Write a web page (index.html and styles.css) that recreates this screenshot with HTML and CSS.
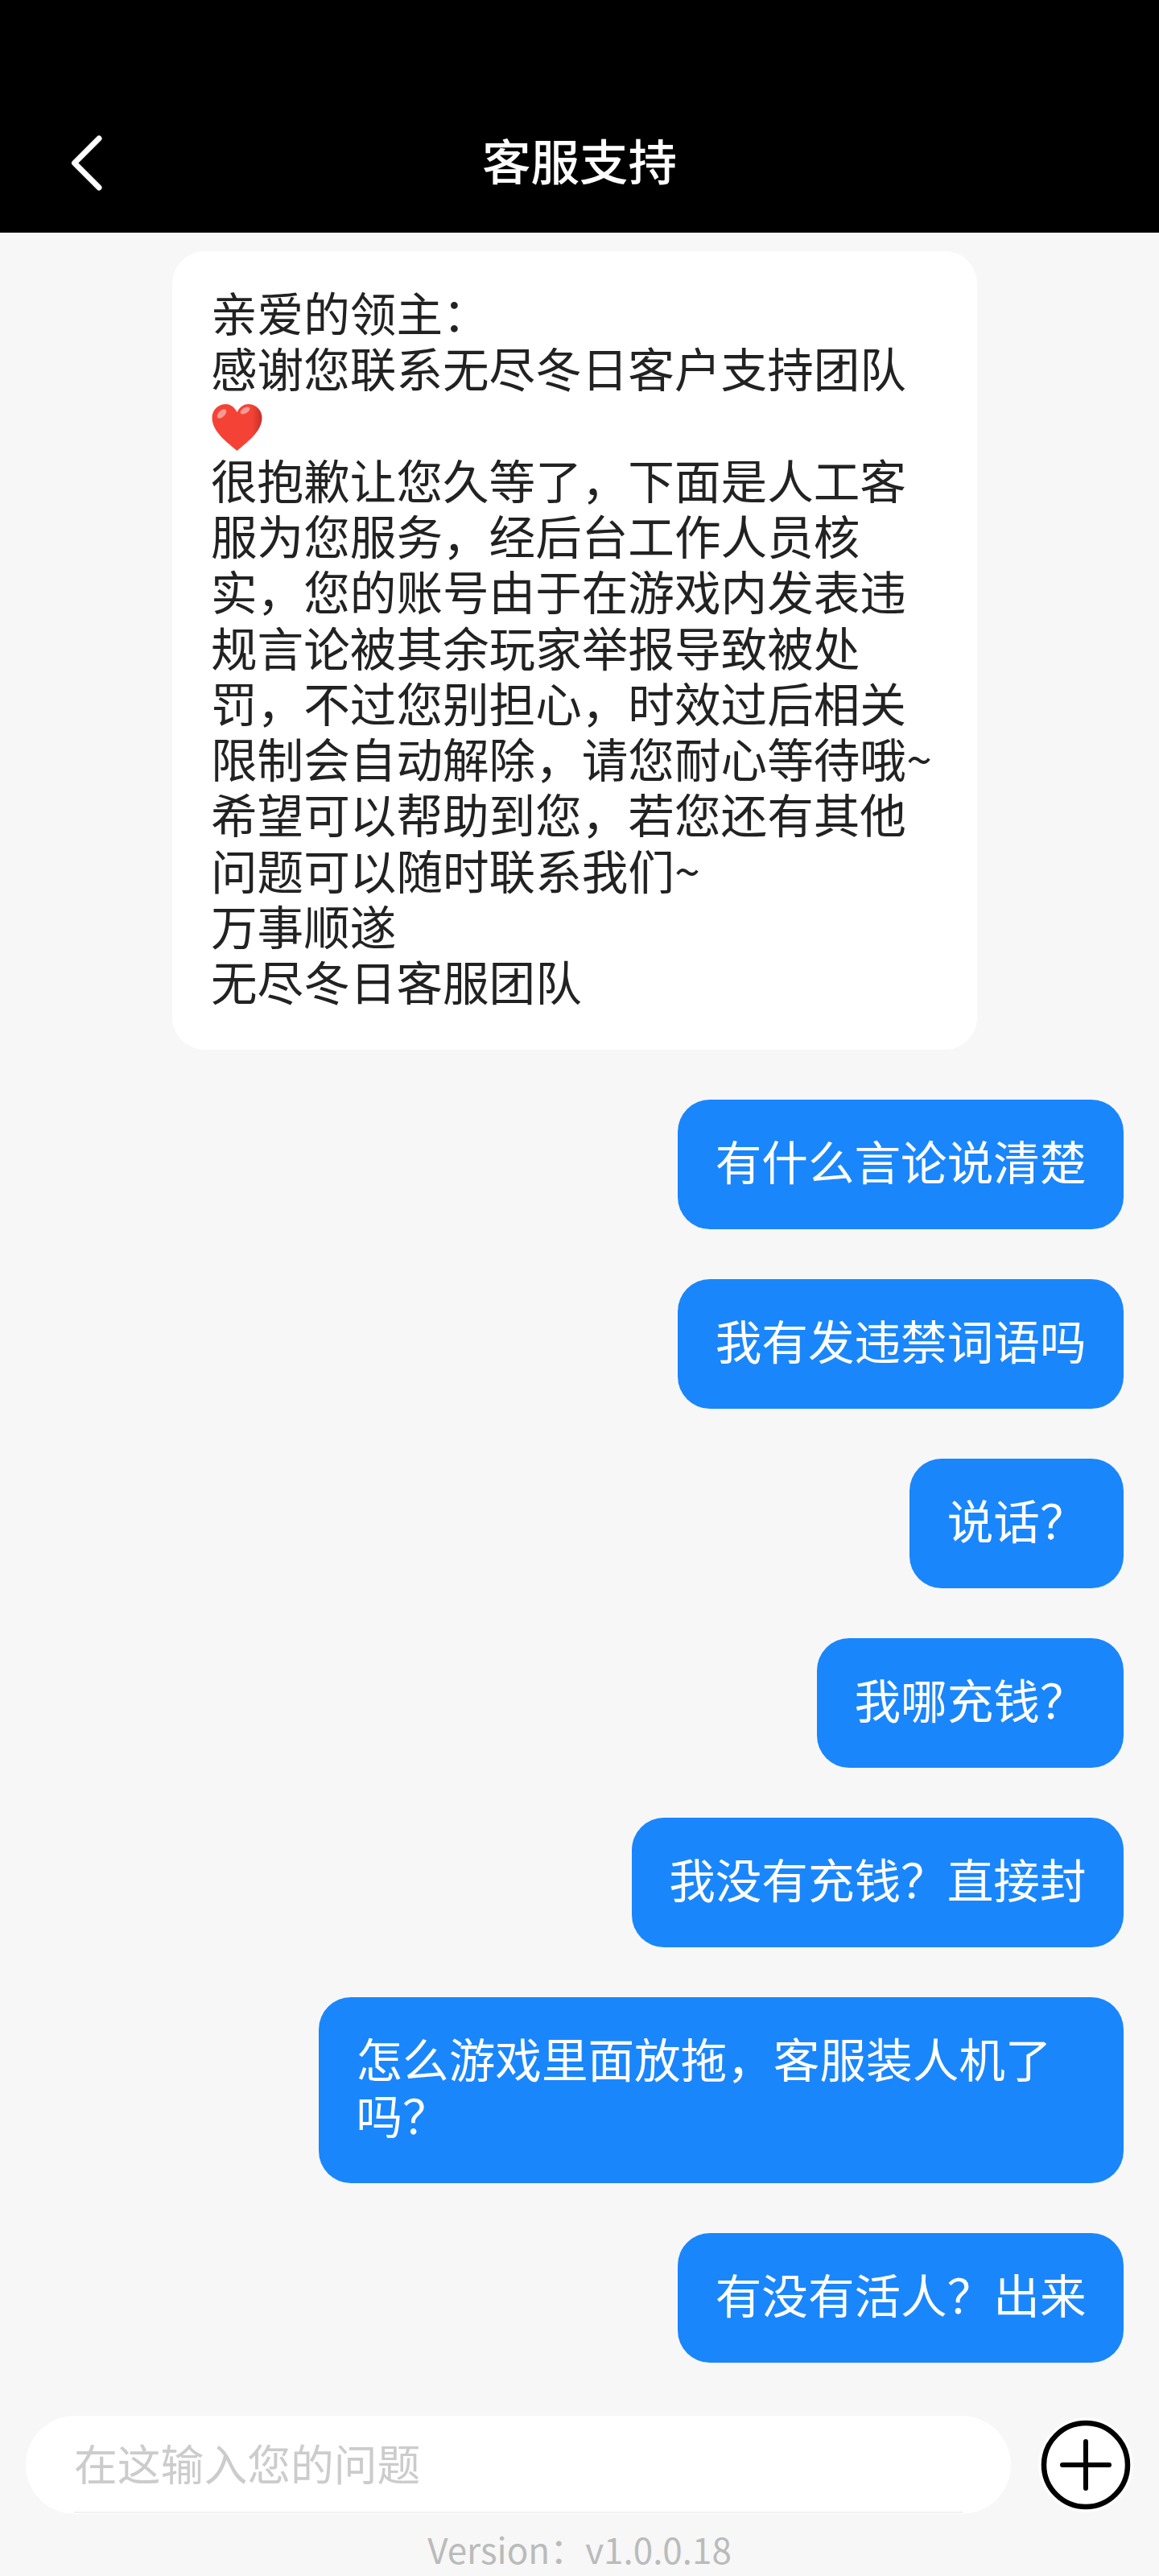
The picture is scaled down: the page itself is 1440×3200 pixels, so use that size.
FILE: index.html
```html
<!DOCTYPE html>
<html lang="zh-CN">
<head>
    <meta charset="UTF-8">
    <title>客服支持</title>
    <link rel="stylesheet" href="styles.css">
</head>
<body>

<header class="top-bar">
    <svg class="back-icon" viewBox="0 0 40 70" width="40" height="70">
        <path d="M35 4 L4.5 34.5 L35 65" fill="none" stroke="#fff" stroke-width="7" stroke-linecap="round" stroke-linejoin="round"/>
    </svg>
    <h1>客服支持</h1>
</header>

<main class="chat">
    <div class="msg msg-in">亲爱的领主&#65306;<br>感谢您联系无尽冬日客户支持团队<svg class="heart" viewBox="1 1 62 58" width="63" height="58"><defs><linearGradient id="heartFill" x1="0" y1="0" x2="1" y2="0"><stop offset="0.8" stop-color="#f44336"/><stop offset="1" stop-color="#c62f28"/></linearGradient></defs><path d="M32 59 C22 50 1 36 1 18 C1 8 9 1 18 1 C24 1 29 5 32 11 C35 5 40 1 46 1 C55 1 63 8 63 18 C63 36 42 50 32 59 Z" fill="url(#heartFill)"/><ellipse cx="13" cy="13" rx="4" ry="7" fill="#f99a92" transform="rotate(45 13 13)"/><ellipse cx="42" cy="9" rx="3.5" ry="6.5" fill="#f99a92" transform="rotate(60 42 9)"/></svg><br>很抱歉让您久等了&#65292;下面是人工客服为您服务&#65292;经后台工作人员核实&#65292;您的账号由于在游戏内发表违规言论被其余玩家举报导致被处罚&#65292;不过您别担心&#65292;时效过后相关限制会自动解除&#65292;请您耐心等待哦~<br>希望可以帮助到您&#65292;若您还有其他问题可以随时联系我们~<br>万事顺遂<br>无尽冬日客服团队</div>
    <div class="msg msg-out">有什么言论说清楚</div>
    <div class="msg msg-out">我有发违禁词语吗</div>
    <div class="msg msg-out">说话&#65311;</div>
    <div class="msg msg-out">我哪充钱&#65311;</div>
    <div class="msg msg-out">我没有充钱&#65311;直接封</div>
    <div class="msg msg-out">怎么游戏里面放拖&#65292;客服装人机了吗&#65311;</div>
    <div class="msg msg-out">有没有活人&#65311;出来</div>
</main>

<footer class="input-area">
    <div class="input-row">
        <div class="input-box">在这输入您的问题</div>
        <svg class="add-icon" viewBox="0 0 118 118" width="118" height="118">
            <circle cx="59" cy="59" r="59" fill="#fdfdfd"/>
            <circle cx="59" cy="59" r="52" fill="#fff" stroke="#000" stroke-width="6.5"/>
            <path d="M59 30 V88 M30 59 H88" stroke="#000" stroke-width="6" stroke-linecap="round"/>
        </svg>
    </div>
    <p class="version">Version&#65306;v1.0.0.18</p>
</footer>

</body>
</html>
```

FILE: styles.css
```css
body {
    font-family: "Noto Sans CJK SC", "Noto Sans", sans-serif;
    background-color: #f7f7f7;
    margin: 0;
    padding: 0;
}
.top-bar {
    background-color: #000;
    color: #fff;
    height: 289px;
    padding: 0 0 47px;
    box-sizing: border-box;
    display: flex;
    align-items: flex-end;
    justify-content: center;
    position: relative;
}
.top-bar h1 {
    font-size: 60.5px;
    font-weight: 500;
    line-height: 88px;
    margin: 0;
}
.back-icon {
    position: absolute;
    left: 88px;
    top: 168px;
}
.chat {
    display: flex;
    flex-direction: column;
    gap: 61.8px;
    padding: 23px 44px 0;
}
.msg {
    font-size: 57.6px;
    line-height: 69.25px;
    padding: 41px 46.5px 51px;
    border-radius: 40px;
    box-sizing: border-box;
    max-width: 1000px;
}
.msg-in {
    background-color: #fff;
    color: #222;
    align-self: flex-start;
    width: 1000px;
    margin-left: 170px;
    padding-left: 48px;
}
.msg-out {
    background-color: #1a86fb;
    color: #fff;
    align-self: flex-end;
}
.heart {
    vertical-align: -9px;
    margin-left: 1px;
}
.input-area {
    padding: 66px 32px 0;
}
.input-row {
    display: flex;
    align-items: center;
    justify-content: space-between;
}
.input-box {
    position: relative;
    width: 1224px;
    height: 122px;
    background-color: #fff;
    border-radius: 61px;
    padding-left: 60px;
    box-sizing: border-box;
    color: #ccc;
    font-size: 53.8px;
    line-height: 116px;
}
/* thin line near the bottom of the field */
.input-box::after {
    content: "";
    position: absolute;
    left: 60px;
    right: 60px;
    bottom: 1px;
    height: 2px;
    background-color: #f0f0f0;
}
.version {
    margin: 8px 0 0;
    text-align: center;
    color: #bbb;
    font-size: 44px;
    line-height: 70px;
}
```
